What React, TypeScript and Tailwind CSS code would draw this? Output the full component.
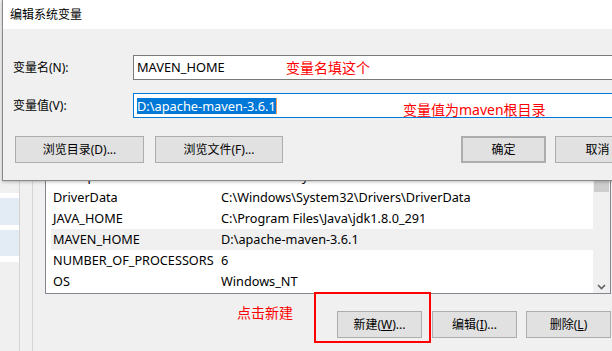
import React from 'react';

const rows = [
  { name: 'ComSpec', value: 'C:\\Windows\\system32\\cmd.exe' },
  { name: 'DriverData', value: 'C:\\Windows\\System32\\Drivers\\DriverData' },
  { name: 'JAVA_HOME', value: 'C:\\Program Files\\Java\\jdk1.8.0_291' },
  { name: 'MAVEN_HOME', value: 'D:\\apache-maven-3.6.1', hover: true },
  { name: 'NUMBER_OF_PROCESSORS', value: '6' },
  { name: 'OS', value: 'Windows_NT' },
];

const Btn = ({ children, className = '' }: { children: React.ReactNode; className?: string }) => (
  <div
    className={`h-[27px] flex items-center justify-center bg-[#e1e1e1] border border-[#adadad] text-[12px] text-black shrink-0 ${className}`}
  >
    {children}
  </div>
);

const App = () => {
  return (
    <div className="relative w-[612px] h-[351px] overflow-hidden bg-[#f0f0f0] font-['Noto_Sans','Noto_Sans_CJK_SC',sans-serif] text-black">
      {/* background window */}
      <div className="flex h-full">
        <div className="w-[19px] shrink-0 flex flex-col">
          <div className="h-[193px]" />
          <div className="bg-white flex flex-col gap-[5px] pt-[5px] pb-[6px]">
            <div className="h-[27px] bg-[#e3ebf5]" />
            <div className="h-[26px] bg-[#e3ebf5]" />
          </div>
        </div>
        <div className="w-[14px] shrink-0 border-l border-r border-[#d4d4d4]" />
        <div className="flex-1 pl-[12px] pr-[1px] flex flex-col">
          <div className="mt-[140px] h-[154px] border border-[#828790] bg-white flex">
            <div className="flex-1 pl-[5px] pt-[25px]">
              {rows.map((r) => (
                <div
                  key={r.name}
                  className={`h-[21px] flex items-center pl-[2px] text-[12.7px] ${r.hover ? 'bg-[#f0f0f0]' : ''}`}
                >
                  <span className="w-[168px] shrink-0 whitespace-nowrap">{r.name}</span>
                  <span className="whitespace-nowrap">{r.value}</span>
                </div>
              ))}
            </div>
            <div className="w-[17px] bg-[#f0f0f0] flex flex-col items-center pt-[20px] pb-[3px]">
              <div className="w-[15px] h-[31px] bg-[#cdcdcd]" />
              <div className="flex-1" />
              <svg width="9" height="6" viewBox="0 0 9 6">
                <path d="M1 1 L4.5 4.5 L8 1" fill="none" stroke="#606060" strokeWidth="1.6" />
              </svg>
            </div>
          </div>
          <div className="flex justify-end mt-[17px] pr-0">
            <Btn className="w-[85px]">
              新建(<span className="underline">W</span>)...
            </Btn>
            <Btn className="w-[85px] ml-[10px]">
              编辑(<span className="underline">I</span>)...
            </Btn>
            <Btn className="w-[85px] ml-[9px]">
              删除(<span className="underline">L</span>)
            </Btn>
          </div>
        </div>
      </div>

      {/* annotation: click new */}
      <div className="absolute left-[314px] top-[292px] w-[117px] h-[51px] border-2 border-[#ff0000]" />
      <div className="absolute left-[237px] top-[303px] text-[14px] text-[#ff0000] leading-[20px]">点击新建</div>

      {/* edit dialog */}
      <div className="absolute left-[2px] top-0 w-[680px] h-[181px] border-l border-b border-[#8a8a8a] bg-[#f0f0f0] flex flex-col shadow-[0_1px_3px_rgba(0,0,0,0.25)]">
        <div className="h-[29px] bg-white flex items-center pl-[7px] text-[12px]">编辑系统变量</div>
        <div className="flex flex-col pl-[10px] pt-[26px]">
          <div className="flex items-center h-[25px]">
            <div className="w-[120px] text-[12px]">变量名(N):</div>
            <div className="flex-1 h-[25px] border border-[#7a7a7a] bg-white flex items-center pl-[3px] text-[12.8px]">
              MAVEN_HOME
            </div>
          </div>
          <div className="flex items-center h-[25px] mt-[13px]">
            <div className="w-[120px] text-[12px]">变量值(V):</div>
            <div className="flex-1 h-[25px] border border-[#0078d7] bg-white flex items-center pl-[3px] text-[12.8px]">
              <span className="bg-[#0078d7] text-white leading-[16px] border-r border-[#e8a060]">D:\apache-maven-3.6.1</span>
            </div>
          </div>
          <div className="flex items-center mt-[18px] pl-[2px]">
            <Btn className="w-[129px]">浏览目录(D)...</Btn>
            <Btn className="w-[128px] ml-[11px]">浏览文件(F)...</Btn>
            <Btn className="w-[85px] ml-[178px] border-2 border-[#0078d7]">确定</Btn>
            <Btn className="w-[85px] ml-[9px]">取消</Btn>
          </div>
        </div>
      </div>

      {/* annotations on dialog */}
      <div className="absolute left-[286px] top-[58px] text-[14px] text-[#ff0000] leading-[20px]">变量名填这个</div>
      <div className="absolute left-[403px] top-[100px] text-[14px] text-[#ff0000] leading-[20px]">变量值为maven根目录</div>
    </div>
  );
};

export default App;
